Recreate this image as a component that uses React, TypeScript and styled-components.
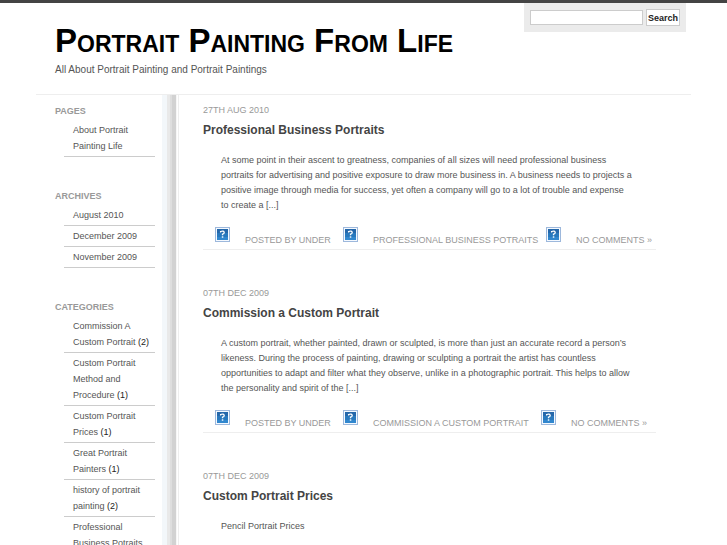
import React from "react";
import styled, { createGlobalStyle } from "styled-components";

const GlobalStyle = createGlobalStyle`
  * { box-sizing: border-box; }
  body {
    margin: 0;
    background: #fff;
    border-top: 3px solid #444;
    color: #555;
    font: 9px/14px "Liberation Sans", Arial, sans-serif;
  }
  a { color: inherit; text-decoration: none; }
  h1, h2, h3, p, ul { margin: 0; padding: 0; }
`;

const Page = styled.div`
  max-width: 655px;
  margin: 0 auto;
`;

const Header = styled.header`
  display: flex;
  justify-content: space-between;
  align-items: flex-start;
  height: 92px;
  padding: 0 5px 0 19px;
  border-bottom: 1px solid #eee;
`;

const Branding = styled.div`
  flex: 1;
  padding-top: 18px;
  white-space: nowrap;
`;

const SiteTitle = styled.h1`
  color: #000;
  font-size: 33px;
  line-height: 40px;
  font-variant: small-caps;
`;

const Tagline = styled.p`
  padding-top: 2px;
  font-size: 10px;
  line-height: 14px;
`;

const SearchForm = styled.form`
  display: flex;
  align-items: center;
  gap: 3px;
  height: 29px;
  padding: 0 6px;
  background: #ebebeb;
`;

const SearchInput = styled.input`
  width: 113px;
  height: 15px;
  padding: 0 2px;
  border: 1px solid #ccc;
  background: #fff;
  font: inherit;
`;

const SearchButton = styled.button`
  width: 34px;
  height: 17px;
  padding: 0;
  border: 1px solid #ccc;
  background: #fff;
  color: #222;
  font: bold 9px/14px "Liberation Sans", Arial, sans-serif;
`;

const Columns = styled.div`
  display: flex;
`;

const Sidebar = styled.aside`
  flex: none;
  width: 143px;
  padding: 9px 16px 0 19px;
  display: flex;
  flex-direction: column;
  gap: 32px;
  border-right: 1px solid #eee;
  background: linear-gradient(
      to right,
      #f3f7fa 0 5px,
      #e9e9e9 5px 8px,
      #dedede 8px 10px,
      #d2d2d2 10px 14px,
      #f6f6f6 14px 15px,
      #fff 15px
    )
    right / 16px 100% no-repeat;
`;

const SidebarHeading = styled.h3`
  color: #999;
  font-size: 9px;
  line-height: 14px;
  text-transform: uppercase;
  padding-bottom: 2px;
`;

const LinkList = styled.ul`
  list-style: none;
  margin-left: 9px;
  width: 91px;
`;

const LinkItem = styled.li`
  padding: 2px 0 2px 9px;
  border-bottom: 1px solid #ccc;
  line-height: 16px;
`;

const Count = styled.span`
  color: #222;
`;

const Posts = styled.main`
  flex: 1;
  min-width: 0;
  padding: 8px 35px 0 24px;
`;

const Post = styled.article`
  padding-bottom: 36px;
`;

const PostDate = styled.p`
  color: #999;
  text-transform: uppercase;
`;

const PostTitle = styled.h2`
  color: #444;
  font-size: 12px;
  line-height: 16px;
  padding-top: 5px;
`;

const Excerpt = styled.p`
  padding: 15px 0 0 18px;
  line-height: 15px;
`;

const PostMeta = styled.div`
  display: flex;
  align-items: flex-start;
  height: 37px;
  padding: 14px 0 0 12px;
  border-bottom: 1px solid #eee;
  color: #999;
  text-transform: uppercase;
  white-space: nowrap;
`;

const MetaItem = styled.span<{ $width?: number }>`
  display: flex;
  gap: 15px;
  flex: none;
  width: ${({ $width }) => ($width ? `${$width}px` : "auto")};
`;

const MetaText = styled.span`
  padding-top: 6px;
`;

const Missing = styled.svg`
  display: block;
  width: 15px;
  height: 15px;
`;

function MissingIcon() {
  return (
    <Missing viewBox="0 0 15 15" aria-hidden="true">
      <rect x=".5" y=".5" width="14" height="14" fill="#f4f9ff" stroke="#9db8dc" />
      <rect x="2" y="2" width="11" height="11" fill="#2878bd" />
      <path d="M2 2h11v4H2z" fill="#2467aa" />
      <path d="M2 10h11v3H2z" fill="#3187ce" />
      <path d="M5.6 5.6V4.5Q8.7 3.4 9.2 5.4Q9.2 6.7 7.5 7.2V8.2" fill="none" stroke="#fff" strokeWidth="1.3" />
      <path d="M6.8 9.3h1.5v1.4H6.8z" fill="#fff" />
    </Missing>
  );
}

type SidebarEntry = { label: string; count?: number };
const sections: { title: string; items: SidebarEntry[] }[] = [
  { title: "Pages", items: [{ label: "About Portrait Painting Life" }] },
  {
    title: "Archives",
    items: [{ label: "August 2010" }, { label: "December 2009" }, { label: "November 2009" }],
  },
  {
    title: "Categories",
    items: [
      { label: "Commission A Custom Portrait", count: 2 },
      { label: "Custom Portrait Method and Procedure", count: 1 },
      { label: "Custom Portrait Prices", count: 1 },
      { label: "Great Portrait Painters", count: 1 },
      { label: "history of portrait painting", count: 2 },
      { label: "Professional Business Potraits" },
    ],
  },
];

const posts = [
  {
    date: "27th Aug 2010",
    title: "Professional Business Portraits",
    category: "Professional Business Potraits",
    categoryWidth: 203,
    excerpt: [
      "At some point in their ascent to greatness, companies of all sizes will need professional business",
      "portraits for advertising and positive exposure to draw more business in. A business needs to projects a",
      "positive image through media for success, yet often a company will go to a lot of trouble and expense",
      "to create a [...]",
    ],
  },
  {
    date: "07th Dec 2009",
    title: "Commission a Custom Portrait",
    category: "Commission a Custom Portrait",
    categoryWidth: 198,
    excerpt: [
      "A custom portrait, whether painted, drawn or sculpted, is more than just an accurate record a person’s",
      "likeness. During the process of painting, drawing or sculpting a portrait the artist has countless",
      "opportunities to adapt and filter what they observe, unlike in a photographic portrait. This helps to allow",
      "the personality and spirit of the [...]",
    ],
  },
  { date: "07th Dec 2009", title: "Custom Portrait Prices", excerpt: ["Pencil Portrait Prices"] },
];

export default function App() {
  return (
    <>
      <GlobalStyle />
      <Page>
        <Header>
          <Branding>
            <SiteTitle><a href="#">Portrait Painting From Life</a></SiteTitle>
            <Tagline>All About Portrait Painting and Portrait Paintings</Tagline>
          </Branding>
          <SearchForm role="search">
            <SearchInput type="text" aria-label="Search" />
            <SearchButton type="submit">Search</SearchButton>
          </SearchForm>
        </Header>
        <Columns>
          <Sidebar>
            {sections.map((section) => (
              <section key={section.title}>
                <SidebarHeading>{section.title}</SidebarHeading>
                <LinkList>
                  {section.items.map((item) => (
                    <LinkItem key={item.label}>
                      <a href="#">{item.label}</a>{" "}
                      {item.count && <Count>{`(${item.count})`}</Count>}
                    </LinkItem>
                  ))}
                </LinkList>
              </section>
            ))}
          </Sidebar>
          <Posts>
            {posts.map((post) => (
              <Post key={post.title}>
                <PostDate>{post.date}</PostDate>
                <PostTitle><a href="#">{post.title}</a></PostTitle>
                <Excerpt>
                  {post.excerpt.map((line, i) => (
                    <React.Fragment key={line}>
                      {i > 0 && <br />}
                      {line}
                    </React.Fragment>
                  ))}
                </Excerpt>
                {post.category && (
                  <PostMeta>
                    <MetaItem $width={128}>
                      <MissingIcon />
                      <MetaText>Posted by under</MetaText>
                    </MetaItem>
                    <MetaItem $width={post.categoryWidth}>
                      <MissingIcon />
                      <MetaText><a href="#">{post.category}</a></MetaText>
                    </MetaItem>
                    <MetaItem>
                      <MissingIcon />
                      <MetaText><a href="#">No Comments »</a></MetaText>
                    </MetaItem>
                  </PostMeta>
                )}
              </Post>
            ))}
          </Posts>
        </Columns>
      </Page>
    </>
  );
}
